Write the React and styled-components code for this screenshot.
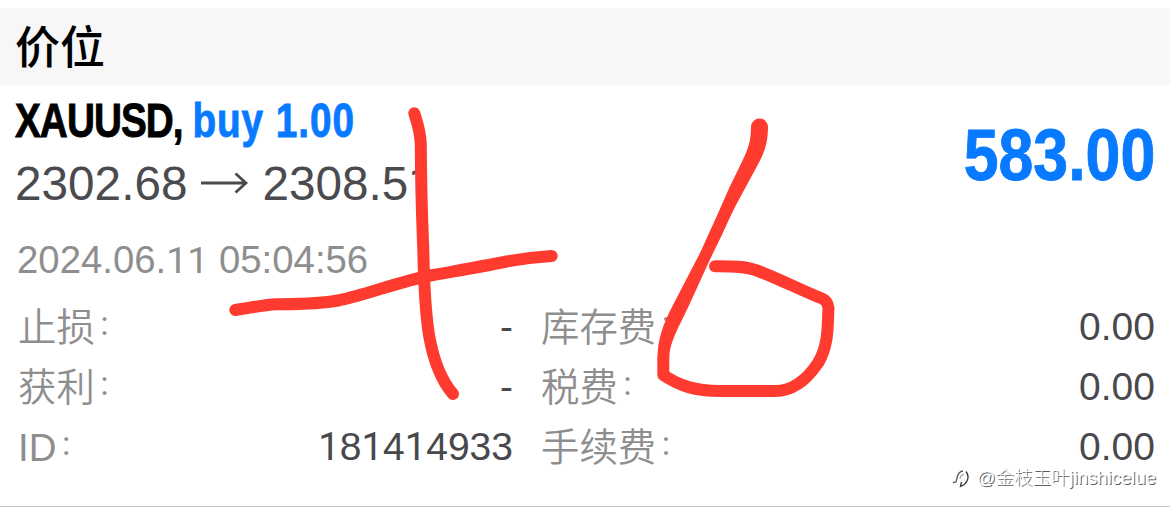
import React from 'react'
import styled, { createGlobalStyle } from 'styled-components'

const GlobalStyle = createGlobalStyle`
  * {
    box-sizing: border-box;
  }

  body {
    margin: 0;
    background-color: white;
    font-family: 'Liberation Sans', 'Noto Sans CJK SC', sans-serif;
    font-kerning: none;
  }
`

const Screen = styled.main`
  position: relative;
  width: 1170px;
  height: 514px;
  padding-top: 8px;
  overflow: hidden;
`

const Header = styled.header`
  height: 77px;
  padding-left: 15px;
  background-color: #f7f7f7;

  h1 {
    margin: 0;
    font-size: 45px;
    font-weight: 500;
    line-height: 81px;
  }
`

const Position = styled.section`
  height: 422px;
  border-bottom: 1px solid #c6c6c8;
`

const Summary = styled.div`
  display: flex;
  justify-content: space-between;
  height: 144px;
  padding: 8px 15px 0;
`

const Condensed = styled.div`
  width: max-content;
  color: ${({ $color }) => $color || 'black'};
  font-size: ${({ $size }) => $size}px;
  font-weight: 700;
  letter-spacing: ${({ $spacing }) => $spacing || 0}px;
  line-height: ${({ $line }) => $line}px;
  white-space: pre;
  transform: scaleX(${({ $scale }) => $scale});
  transform-origin: ${({ $origin }) => $origin || 'left'} center;
  -webkit-text-stroke: 0.9px currentColor;

  span {
    color: #087aff;
    letter-spacing: 1.2px;
  }
`

const Prices = styled.div`
  display: flex;
  align-items: center;
  height: 72px;
  color: #4a4a4f;
  font-size: 47.7px;

  svg {
    margin: 0 14px;
  }
`

const Profit = styled.div`
  padding-top: 22px;
`

const Time = styled.div`
  height: 68px;
  padding-left: 17px;
  color: #8e8e8e;
  font-size: 38.3px;
  line-height: 62px;
`

const Details = styled.div`
  display: grid;
  grid-template-columns: 495px 614px;
  grid-auto-rows: 60px;
  column-gap: 28px;
  padding-left: 18px;
`

const Row = styled.div`
  display: flex;
  justify-content: space-between;
  height: 60px;
  line-height: 60px;
`

const Label = styled.span`
  color: #8e8e8e;
  font-size: 38.4px;
  font-weight: 350;
  line-height: 61px;
`

const Colon = styled.span`
  margin-left: 3px;
  font-size: 0.7em;
  line-height: 0;
  vertical-align: 6px;
`

const Value = styled.span`
  color: #48484d;
  font-size: 39px;
`

// a "1" without the foot
const One = styled.span`
  font-family: Roboto, sans-serif;
  font-size: 0.98em;
  line-height: 0;
`

const Drawing = styled.svg`
  position: absolute;
  top: 0;
  left: 0;
`

const Watermark = styled.div`
  position: absolute;
  right: 14px;
  bottom: 22px;
  display: flex;
  align-items: center;
  color: white;
  font-size: 18.5px;
  font-weight: 300;
  line-height: 28px;
  text-shadow: 1px 1px 0.5px rgba(0, 0, 0, 0.65);

  svg {
    margin-right: 7px;
  }
`

const details = [
  ['止损', '-'],
  ['库存费', '0.00'],
  ['获利', '-'],
  ['税费', '0.00'],
  ['ID', '181414933'],
  ['手续费', '0.00']
]

const Digits = ({ children }) => (
  <span>{children.split('').map((char, i) => (char === '1' ? <One key={i}>1</One> : char))}</span>
)

const Arrow = () => (
  <svg width='47' height='24' viewBox='0 0 47 24' fill='none' stroke='#4a4a4f' strokeWidth='2.8'>
    <path d='M0 12H44M34.5 2.5L45 12L34.5 21.5' />
  </svg>
)

const Marks = () => (
  <Drawing
    width='1170'
    height='514'
    viewBox='0 0 1170 514'
    fill='none'
    stroke='#ff3b30'
    strokeWidth='12'
    strokeLinecap='round'
    strokeLinejoin='round'
  >
    <path d='M414.3 113.3C417 122 420.7 132 420.8 145C421 195 422 215 423.3 250C424 285 425 310 429 335C433 358 440 379 453 394' />
    <path d='M235.3 310C250 308 262 305 276.7 304.3C300 304 320 304 338 300.5C366 295 397 282 433 275C455 271 480 267 506.7 261.5C520 259 535 257 551.7 256' />
    <path
      d='M751 127C751 138 749 146 745.5 154C742 162 737 172 733 180C728 190 724 200 719.5 210L700 253L673 305C663 324 657.5 340 657.5 358H669.3C669.3 347 674 336 681 322C694 296 705 269 717 245C723 233 729 219 735 207C742 194 749 181 755 170C762 157 768 147 768 127A8.5 8.5 0 0 0 751 127Z'
      fill='#ff3b30'
      stroke='none'
    />
    <path d='M663.3 358V375C680 386 695 391 720 391H775C795 391 808 378 818 363C829 345 827.5 325 828.5 308C828 303 826 300 822 298.5C800 290 780 279 757 270.5C745 266 730 266.3 715 266.3' />
  </Drawing>
)

const WatermarkLogo = () => (
  <svg width='18' height='20' viewBox='0 0 18 20' fill='none' stroke='#333' strokeWidth='1.3'>
    <path d='M1 14.5L4 14L5.5 8Q7 3.5 11 3' strokeOpacity='0.8' />
    <path d='M8 11Q9 6.5 12 6.5' strokeOpacity='0.4' />
    <path d='M14 3.5Q17.5 8 15 13Q13 17 8.5 18.5L9.5 14' />
  </svg>
)

const App = () => {
  return (
    <Screen>
      <GlobalStyle />
      <Header>
        <h1>价位</h1>
      </Header>
      <Position>
        <Summary>
          <div>
            <Condensed $size={49} $line={54} $scale={0.79} $spacing={-1.2}>
              XAUUSD, <span>buy 1.00</span>
            </Condensed>
            <Prices>
              <Digits>2302.68</Digits>
              <Arrow />
              <Digits>2308.51</Digits>
            </Prices>
          </div>
          <Profit>
            <Condensed $size={72} $line={80} $scale={0.87} $color='#087aff' $origin='right'>
              583.00
            </Condensed>
          </Profit>
        </Summary>
        <Time>
          <Digits>2024.06.11 05:04:56</Digits>
        </Time>
        <Details>
          {details.map(([label, value]) => (
            <Row key={label}>
              <Label>
                {label}
                <Colon>：</Colon>
              </Label>
              <Value>
                <Digits>{value}</Digits>
              </Value>
            </Row>
          ))}
        </Details>
      </Position>
      <Marks />
      <Watermark>
        <WatermarkLogo />
        @金枝玉叶jinshicelue
      </Watermark>
    </Screen>
  )
}

export default App
